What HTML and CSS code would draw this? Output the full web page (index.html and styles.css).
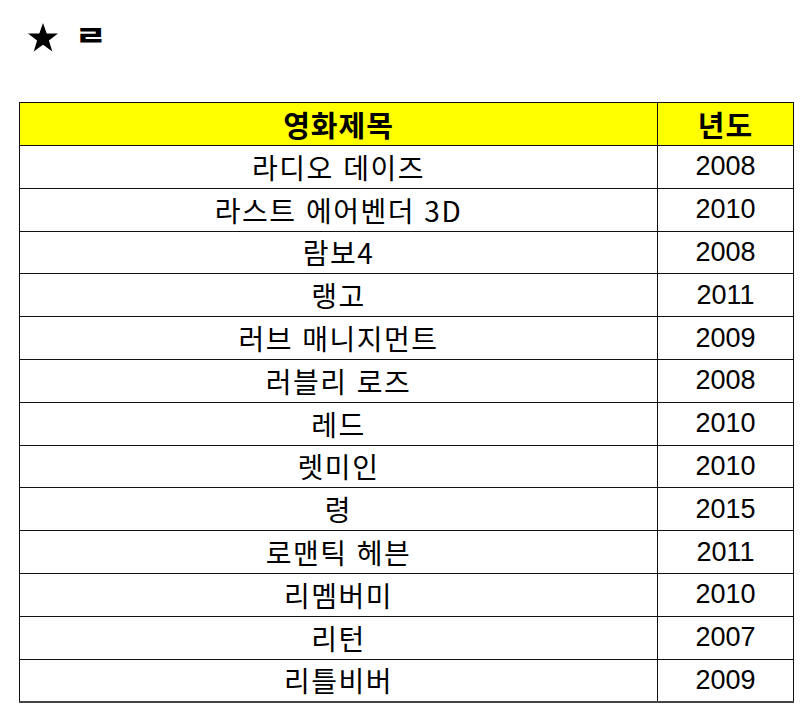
FILE: index.html
```html
<!DOCTYPE html>
<html lang="ko">
<head>
<meta charset="utf-8">
<link rel="stylesheet" href="styles.css">
</head>
<body>
<div class="page">
  <div class="title">
    <svg class="star" viewBox="0 0 32 32" width="32" height="32"><polygon points="16,1 19.7,11.6 31,11.6 21.9,18.4 25.3,29.5 16,22.8 6.7,29.5 10.1,18.4 1,11.6 12.3,11.6" fill="#000"/></svg>
    <span class="letter">ㄹ</span>
  </div>
  <table class="movies">
    <thead>
      <tr><th class="c-title">영화제목</th><th class="c-year">년도</th></tr>
    </thead>
    <tbody>
      <tr><td>라디오 데이즈</td><td class="num">2008</td></tr>
      <tr><td>라스트 에어벤더 3D</td><td class="num">2010</td></tr>
      <tr><td>람보4</td><td class="num">2008</td></tr>
      <tr><td>랭고</td><td class="num">2011</td></tr>
      <tr><td>러브 매니지먼트</td><td class="num">2009</td></tr>
      <tr><td>러블리 로즈</td><td class="num">2008</td></tr>
      <tr><td>레드</td><td class="num">2010</td></tr>
      <tr><td>렛미인</td><td class="num">2010</td></tr>
      <tr><td>령</td><td class="num">2015</td></tr>
      <tr><td>로맨틱 헤븐</td><td class="num">2011</td></tr>
      <tr><td>리멤버미</td><td class="num">2010</td></tr>
      <tr><td>리턴</td><td class="num">2007</td></tr>
      <tr><td>리틀비버</td><td class="num">2009</td></tr>
    </tbody>
  </table>
</div>
</body>
</html>
```

FILE: styles.css
```css
html, body {
  margin: 0;
  padding: 0;
  background: #fff;
}
.page {
  padding: 21px 0 0 19px;
  width: 775px;
  font-family: "Noto Sans CJK KR", "Liberation Sans", sans-serif;
  color: #000;
}
.title {
  display: flex;
  align-items: center;
  height: 34px;
  padding-left: 8px;
  gap: 16px;
}
.star {
  display: block;
}
.letter {
  font-weight: 900;
  font-size: 30px;
  line-height: 1;
  transform: scale(1.15, 0.9);
  transform-origin: left center;
  margin-top: -8px;
}
.movies {
  margin-top: 47px;
  width: 775px;
  border-collapse: collapse;
  table-layout: fixed;
  border: 1px solid #000;
  border-bottom: 2px solid #444;
}
.movies th, .movies td {
  border: 1px solid #111;
  text-align: center;
  padding: 0;
  height: 41.8px;
  font-size: 28px;
  letter-spacing: 1.5px;
  line-height: 1;
}
.movies th {
  background: #ffff00;
  font-weight: 700;
  font-size: 29px;
  letter-spacing: 1px;
  height: 42px;
}
.c-year {
  width: 135px;
}
.movies .num {
  font-family: "Liberation Sans", sans-serif;
  font-size: 27px;
  letter-spacing: 0;
}
```
